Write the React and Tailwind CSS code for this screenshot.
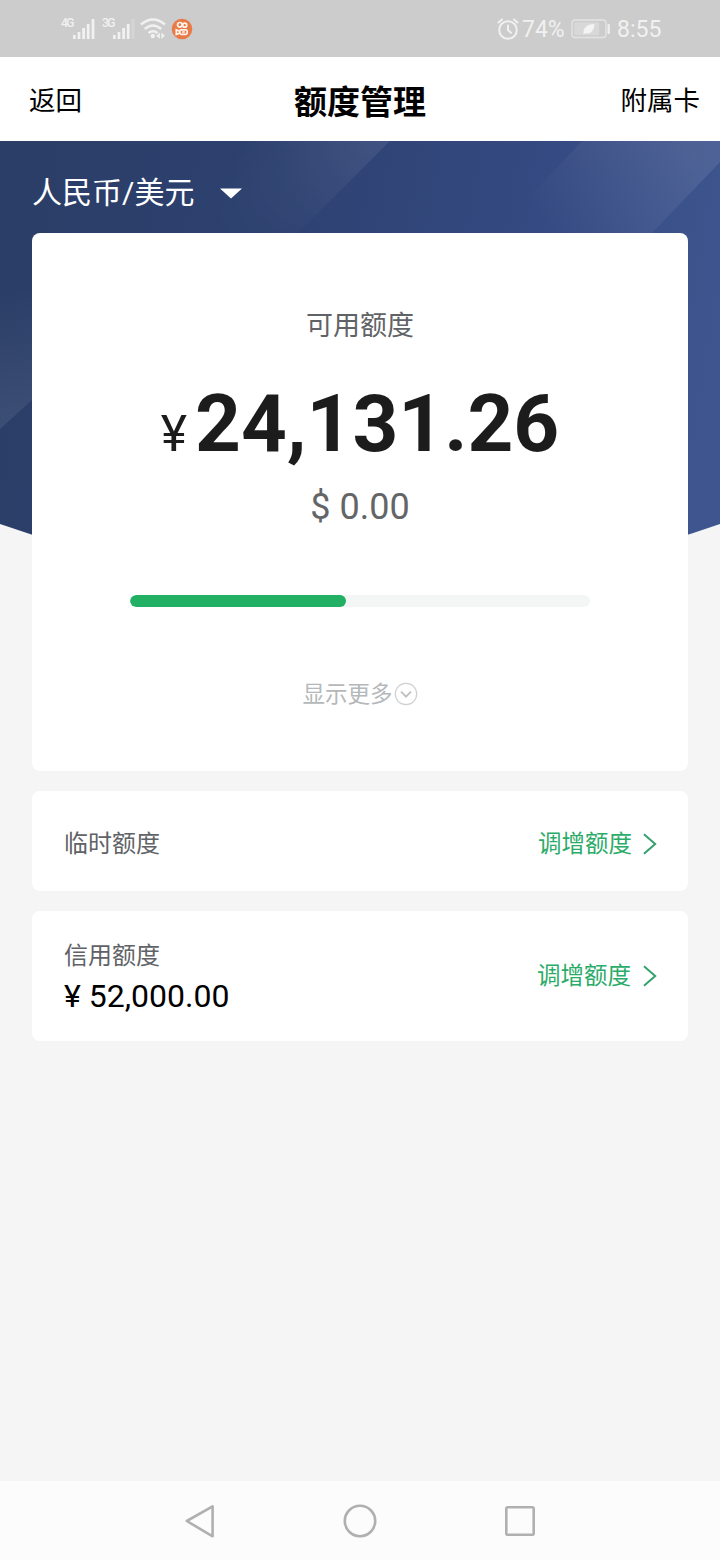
import React from "react";

function Signal({ dim }) {
  return (
    <svg width="23" height="22" viewBox="0 0 23 22" fill="#f1f1f1">
      <rect x="0" y="17" width="2.6" height="4" />
      <rect x="4.6" y="14" width="2.8" height="7" />
      <rect x="9.2" y="10" width="2.8" height="11" />
      <rect x="13.8" y="6" width="2.8" height="15" />
      <rect x="18.6" y="1" width="2.8" height="20" opacity={dim ? 0.25 : 1} />
    </svg>
  );
}

function StatusBar() {
  return (
    <div className="flex h-[57px] items-center justify-between bg-[#cccccc] pr-[58px] pl-[61px] text-[#f1f1f1]">
      <div className="flex h-[22px] items-start">
        <span className="w-[12px] text-[12px] leading-[10px] font-medium tracking-[-1.5px]">4G</span>
        <Signal />
        <span className="ml-[6px] w-[11px] text-[12px] leading-[10px] font-medium tracking-[-1.5px]">3G</span>
        <Signal dim />
        <svg className="ml-[4px]" width="26" height="22" viewBox="0 0 26 22" fill="none" stroke="#f1f1f1" strokeWidth="2.4">
          <path d="M1 6.5Q13 -3.5 25 6.5M4.8 11Q13 4 21.2 11M8.5 15Q13 11.5 17.5 15" />
          <circle cx="12.8" cy="18" r="2.2" fill="#f1f1f1" stroke="none" />
          <path d="M19.8 14.5L16.4 17.7L19.8 20.9zM21.4 14.5L24.8 17.7L21.4 20.9z" fill="#f1f1f1" stroke="none" />
        </svg>
        <svg className="ml-[5px]" width="22" height="22" viewBox="0 0 22 22">
          <circle cx="11" cy="11" r="10.3" fill="#e77a47" />
          <g fill="none" stroke="#fff4ec" strokeWidth="1.7">
            <circle cx="8.8" cy="6.8" r="2.3" />
            <circle cx="13.7" cy="7.2" r="2" />
            <rect x="8.8" y="11.8" width="7.4" height="4.6" rx="1.6" />
            <path d="M8.8 13.2L5.3 11.8V16.4L8.8 15" />
            <path d="M11.2 14h2.6" />
          </g>
        </svg>
      </div>
      <div className="flex items-center">
        <svg width="22" height="22" viewBox="0 0 22 22" fill="none" stroke="#f1f1f1" strokeWidth="2" strokeLinecap="round">
          <circle cx="11" cy="12" r="8.8" />
          <path d="M11 7.5V12L14 14.8M1.5 4.5L5 1.5M20.5 4.5L17 1.5" />
        </svg>
        <span className="mt-[2px] ml-[3px] w-[45px] text-[23px] leading-[28px] whitespace-nowrap">74%</span>
        <svg className="ml-[4px]" width="40" height="20" viewBox="0 0 40 20">
          <rect x="1" y="1" width="34" height="17.5" rx="3" fill="none" stroke="#e3e3e3" strokeWidth="1.4" />
          <rect x="3.2" y="3.2" width="25" height="13" rx="1" fill="#d8d8d8" />
          <rect x="36.5" y="5" width="2.4" height="10" rx="1" fill="#eeeeee" />
          <path d="M12.5 15.5C12 8 16 5.5 23.5 5C23 11.5 20 15.5 14.5 14.2L12.5 15.5z" fill="#f4f4f4" />
        </svg>
        <span className="mt-[2px] ml-[6px] w-[45px] text-[23px] leading-[28px] whitespace-nowrap">8:55</span>
      </div>
    </div>
  );
}

function NavBar() {
  return (
    <header className="flex h-[84px] items-center bg-white pt-[4px] pr-[20px] pl-[29px] text-black">
      <span className="flex-1 text-[26.5px] leading-[40px]">返回</span>
      <h1 className="mr-[9px] pt-[3px] text-[33px] leading-[40px] font-bold whitespace-nowrap">额度管理</h1>
      <span className="flex-1 text-right text-[26.5px] leading-[40px]">附属卡</span>
    </header>
  );
}

function Backdrop() {
  return (
    <svg className="absolute top-0 left-0" width="720" height="450" viewBox="0 0 720 450">
      <defs>
        <linearGradient id="base" x1="0" y1="0.3" x2="1" y2="0.4">
          <stop offset="0" stopColor="#2b3e67" />
          <stop offset="0.35" stopColor="#2d4170" />
          <stop offset="0.7" stopColor="#344980" />
          <stop offset="1" stopColor="#3e558f" />
        </linearGradient>
        <linearGradient id="beamA" gradientUnits="userSpaceOnUse" x1="250" y1="-20" x2="350" y2="40">
          <stop offset="0" stopColor="#fff" stopOpacity="0" />
          <stop offset="1" stopColor="#fff" stopOpacity="0.08" />
        </linearGradient>
        <linearGradient id="beamB" gradientUnits="userSpaceOnUse" x1="560" y1="100" x2="680" y2="0">
          <stop offset="0" stopColor="#fff" stopOpacity="0" />
          <stop offset="1" stopColor="#fff" stopOpacity="0.09" />
        </linearGradient>
        <linearGradient id="beamC" gradientUnits="userSpaceOnUse" x1="0" y1="150" x2="16" y2="280">
          <stop offset="0" stopColor="#fff" stopOpacity="0" />
          <stop offset="1" stopColor="#fff" stopOpacity="0.08" />
        </linearGradient>
        <linearGradient id="fade" x1="0" y1="0" x2="0" y2="1">
          <stop offset="0" stopColor="#fff" />
          <stop offset="1" stopColor="#000" />
        </linearGradient>
        <mask id="fadeMask">
          <rect width="720" height="115" fill="url(#fade)" />
        </mask>
      </defs>
      <path d="M0 0H720V383Q360 509 0 383z" fill="url(#base)" />
      <path d="M150 0H390L275 115H150z" fill="url(#beamA)" mask="url(#fadeMask)" />
      <path d="M582 0H720V21L630 115H474z" fill="url(#beamB)" />
      <path d="M0 140H60V234L32 259L0 288z" fill="url(#beamC)" />
    </svg>
  );
}

function AdjustLink({ className, labelClassName }) {
  return (
    <div className={"flex items-center text-[#2bab69] " + className}>
      <span className={"text-[23.5px] leading-[32px] " + labelClassName}>调增额度</span>
      <svg width="14" height="22" viewBox="0 0 14 22" fill="none" stroke="#35a06c" strokeWidth="2">
        <path d="M1 1.2L12.2 11L1 20.8" />
      </svg>
    </div>
  );
}

function LimitCard() {
  return (
    <section className="flex h-[538px] flex-col items-center rounded-lg bg-white">
      <p className="mt-[73px] text-[27px] leading-[40px] text-[#606266]">可用额度</p>
      <p className="mt-[31px] flex h-[94px] items-baseline text-[#1c1c1c]">
        <span className="mr-[8px] text-[50px] leading-[94px]">¥</span>
        <span className="text-[80px] leading-[94px] font-bold">24,131.26</span>
      </p>
      <p className="mt-[15px] text-[36px] leading-[42px] text-[#636567]">$ 0.00</p>
      <div className="mt-[67px] h-[12px] w-[460px] overflow-hidden rounded-full bg-[#f4f5f5]">
        <div className="h-full w-[216px] rounded-full bg-[#22b064]" />
      </div>
      <div className="mt-[71px] flex items-center text-[#b5b8ba]">
        <span className="text-[22.5px] leading-[32px]">显示更多</span>
        <svg className="ml-[1px]" width="24" height="24" viewBox="0 0 24 24" fill="none">
          <circle cx="12" cy="12" r="10.7" stroke="#cfd0d1" strokeWidth="1.2" />
          <path d="M7 9.7L12 14.7L17 9.7" stroke="#bdbfc0" strokeWidth="1.8" />
        </svg>
      </div>
    </section>
  );
}

export default function App() {
  return (
    <div className="flex h-[1560px] w-[720px] flex-col overflow-hidden bg-[#f5f5f5] font-['Roboto','Noto_Sans_CJK_SC',sans-serif]">
      <StatusBar />
      <NavBar />
      <main className="relative flex-1">
        <Backdrop />
        <div className="relative flex flex-col px-[32px]">
          <div className="flex h-[92px] items-center pt-[12px] text-white">
            <span className="text-[30px] leading-[44px]">人民币/美元</span>
            <svg className="mt-[1px] ml-[26px]" width="22" height="11" viewBox="0 0 22 11" fill="#fff">
              <path d="M0 0.5H22L11 10.5z" />
            </svg>
          </div>
          <LimitCard />
          <section className="mt-[20px] flex h-[100px] items-center justify-between rounded-lg bg-white pr-[31px] pl-[32px]">
            <span className="mt-[5px] text-[24px] leading-[36px] text-[#606266]">临时额度</span>
            <AdjustLink className="mt-[5px]" labelClassName="mr-[11px]" />
          </section>
          <section className="mt-[20px] flex h-[130px] items-center justify-between rounded-lg bg-white pr-[31px] pl-[32px]">
            <div className="flex flex-col">
              <span className="mt-[2px] text-[24px] leading-[36px] text-[#606266]">信用额度</span>
              <span className="mt-[2px] text-[32px] leading-[40px] text-black">¥ 52,000.00</span>
            </div>
            <AdjustLink className="" labelClassName="mr-[12px]" />
          </section>
        </div>
      </main>
      <nav className="flex h-[79px] items-center justify-center gap-[120px] bg-[#fcfcfc]">
        <svg width="40" height="40" viewBox="0 0 40 40" fill="none" stroke="#b0b0b0" strokeWidth="2.6" strokeLinejoin="round">
          <path d="M6.8 20L32.6 5.3V35.3z" />
        </svg>
        <svg width="40" height="40" viewBox="0 0 40 40" fill="none" stroke="#b0b0b0" strokeWidth="2.6">
          <circle cx="20" cy="20" r="15.2" />
        </svg>
        <svg width="40" height="40" viewBox="0 0 40 40" fill="none" stroke="#b0b0b0" strokeWidth="2.6">
          <rect x="6.3" y="6.3" width="27.4" height="27.4" rx="1.5" />
        </svg>
      </nav>
    </div>
  );
}
